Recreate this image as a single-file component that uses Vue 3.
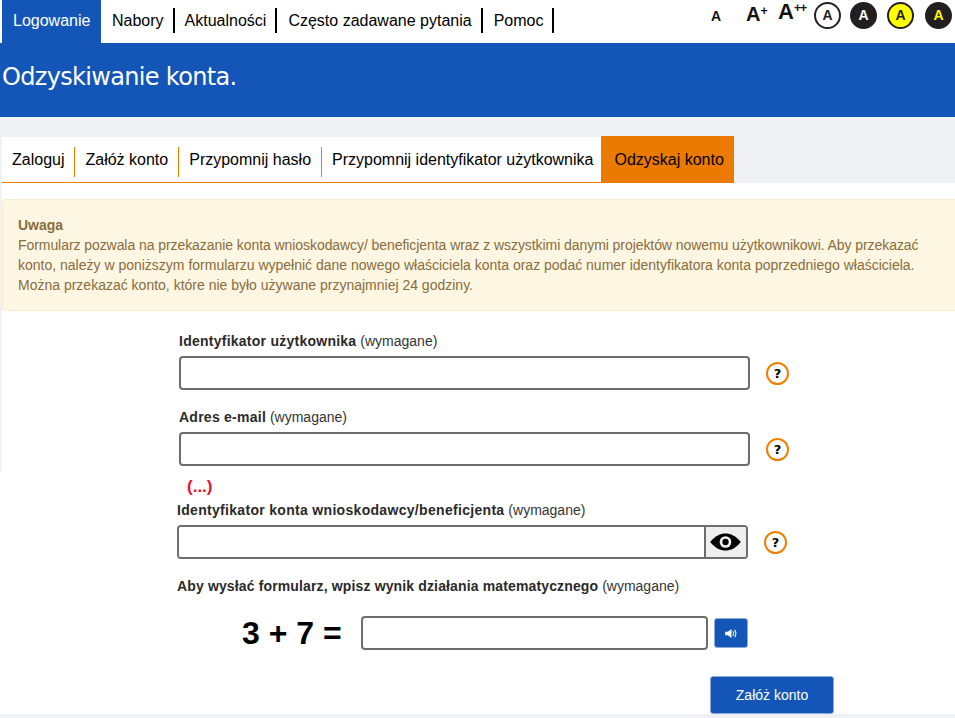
<script setup>
const menu = ['Nabory', 'Aktualności', 'Często zadawane pytania', 'Pomoc']
const tabs = ['Zaloguj', 'Załóż konto', 'Przypomnij hasło', 'Przypomnij identyfikator użytkownika']
</script>

<template>
  <div class="page">
    <nav class="topnav">
      <a class="tab-on">Logowanie</a>
      <a v-for="m in menu" :key="m" class="item">{{ m }}</a>
      <div class="access">
        <span class="sz s1">A</span>
        <span class="sz s2">A<sup>+</sup></span>
        <span class="sz s3">A<sup>++</sup></span>
        <span class="dot d-white">A</span>
        <span class="dot d-black">A</span>
        <span class="dot d-yellow">A</span>
        <span class="dot d-by">A</span>
      </div>
    </nav>
    <header class="hero"><h1>Odzyskiwanie konta.</h1></header>

    <div class="upper">
      <div class="tabs">
        <a v-for="t in tabs" :key="t" class="t">{{ t }}</a>
        <a class="t-on">Odzyskaj konto</a>
      </div>
      <div class="body">
        <div class="alert">
          <strong>Uwaga</strong><br>
          <span class="line1">Formularz pozwala na przekazanie konta wnioskodawcy/ beneficjenta wraz z wszystkimi danymi projektów nowemu użytkownikowi. Aby przekazać</span>
          konto, należy w poniższym formularzu wypełnić dane nowego właściciela konta oraz podać numer identyfikatora konta poprzedniego właściciela. Można przekazać konto, które nie było używane przynajmniej 24 godziny.
        </div>
        <div class="field f1">
          <label><b>Identyfikator użytkownika</b> (wymagane)</label>
          <div class="row">
            <input type="text" class="inp" />
            <span class="help">?</span>
          </div>
        </div>
        <div class="field f2">
          <label><b>Adres e-mail</b> (wymagane)</label>
          <div class="row">
            <input type="text" class="inp" />
            <span class="help">?</span>
          </div>
        </div>
      </div>
    </div>

    <div class="lower">
      <div class="dots">(...)</div>
      <div class="field f3">
        <label><b>Identyfikator konta wnioskodawcy/beneficjenta</b> (wymagane)</label>
        <div class="row">
          <div class="group">
            <input type="text" class="inp-g" />
            <button class="eye" aria-label="Pokaż">
              <svg width="33" height="18" viewBox="0 0 34 20">
                <path d="M0 10C6 3 11 .5 17 .5S28 3 34 10C28 17 23 19.500 17 19.500S6 17 0 10Z" fill="#000"/>
                <circle cx="17" cy="10" r="6.500" fill="#eee"/>
                <circle cx="17" cy="10" r="3.500" fill="#000"/>
              </svg>
            </button>
          </div>
          <span class="help">?</span>
        </div>
      </div>
      <div class="f4"><b>Aby wysłać formularz, wpisz wynik działania matematycznego</b> (wymagane)</div>
      <div class="math">
        <span class="eq">3 + 7 =</span>
        <input type="text" class="inp-m" />
        <button class="snd" aria-label="Odsłuchaj">
          <svg width="12" height="9" viewBox="0 0 13 10">
            <path d="M0 3h3l4-3v10L3 7H0Z" fill="#fff"/>
            <path d="M8.500 2.500c1 1.500 1 3.500 0 5M10.500 1c1.800 2.500 1.800 5.500 0 8" fill="none" stroke="#fff" stroke-width="1.200"/>
          </svg>
        </button>
      </div>
      <div class="submit"><button class="btn">Załóż konto</button></div>
    </div>
  </div>
</template>

<style scoped>
.page { width: 955px; height: 718px; overflow: hidden; background: #f0f1f5; font-family: "Liberation Sans", Arial, sans-serif; color: #000; }
.topnav { height: 43px; background: #fff; display: flex; padding-left: 2px; font-size: 16px; position: relative; }
.tab-on { width: 99px; box-sizing: border-box; padding-left: 11px; background: #1356b8; color: #fff; line-height: 42px; }
.item { margin: 8px 0 10px; padding: 0 9px 0 11px; border-right: 2px solid #000; line-height: 25px; height: 25px; }
.item:nth-child(3) { margin-left: -1px; }
.access { margin-left: auto; position: relative; width: 260px; }
.sz, .dot { position: absolute; font-weight: 700; }
.sz { color: #111; line-height: 1; white-space: nowrap; }
.sz sup { font-size: 0.62em; line-height: 0; vertical-align: 0.5em; }
.s1 { left: 16px; top: 9px; font-size: 14px; }
.s2 { left: 51px; top: 4px; font-size: 20px; }
.s3 { left: 83px; top: 1px; font-size: 22px; }
.s3 sup { font-size: 0.55em; vertical-align: 0.6em; letter-spacing: -1px; }
.dot { top: 2px; width: 27px; height: 27px; border-radius: 50%; box-sizing: border-box; text-align: center; font-size: 14px; line-height: 27px; }
.d-white { left: 119px; background: #fff; border: 2px solid #222; color: #222; line-height: 23px; }
.d-black { left: 155px; background: #231f20; color: #fff; }
.d-yellow { left: 192px; background: #ff0; border: 2px solid #231f20; color: #222; line-height: 23px; }
.d-by { left: 230px; background: #231f20; color: #ff0; }
.hero { height: 74px; background: #1356b8; color: #fff; }
.hero h1 { margin: 0; padding: 18px 0 0 2px; font: 400 24px/32px "DejaVu Sans", Tahoma, sans-serif; letter-spacing: -0.68px; }
.upper { height: 355px; padding-left: 2px; box-sizing: border-box; }
.tabs { height: 66px; box-sizing: border-box; padding-top: 20px; display: flex; font-size: 16px; position: relative; }
.tabs::before { content: ""; position: absolute; left: 0; top: 20px; width: 599px; height: 46px; box-sizing: border-box; background: #fff; border-bottom: 1px solid #ee7f00; }
.t { position: relative; height: 30px; margin-top: 10px; padding: 0 10px 0 10px; line-height: 26px; border-right: 1px solid #ee7f00; }
.t:nth-child(4) { border-right: 0; padding-right: 8px; }
.t-on { position: relative; margin-top: -1px; width: 133px; height: 47px; box-sizing: border-box; padding-left: 13px; background: #ea7a00; line-height: 48px; white-space: nowrap; }
.body { background: #fff; height: 289px; padding-top: 16px; box-sizing: border-box; }
.alert { height: 112px; box-sizing: border-box; padding: 15px; background: #fcf6e2; border: 1px solid #faebcc; border-right: 0; border-radius: 4px 0 0 4px; color: #8a6d3b; font-size: 14px; line-height: 20px; }
.line1 { letter-spacing: -0.067px; }
.field label { display: block; font-size: 14px; line-height: 20px; color: #333; }
.field b { color: #2a2a2a; letter-spacing: 0.25px; }
.field { margin-left: 177px; }
.f1 { margin-top: 20px; }
.f2 { margin-top: 17px; }
.row { display: flex; align-items: center; margin-top: 5px; }
.inp { width: 571px; height: 34px; box-sizing: border-box; border: 2px solid #6d6d6d; border-radius: 4px; background: #fff; padding: 0 10px; }
.help { margin-left: 16px; width: 23px; height: 23px; box-sizing: border-box; border: 2px solid #ee7f00; border-radius: 50%; text-align: center; font: 700 13px/19px "DejaVu Sans", sans-serif; color: #000; }
.lower { height: 242px; background: #fff; position: relative; }
.dots { padding-left: 187px; padding-top: 5px; font-size: 17px; font-weight: 700; line-height: 20px; color: #e8112d; }
.f3 { margin-left: 177px; margin-top: 3px; }
.f3 b { letter-spacing: 0.31px; }
.f3 .row { margin-top: 5px; }
.group { width: 571px; height: 34px; box-sizing: border-box; border: 2px solid #6d6d6d; border-radius: 4px; display: flex; overflow: hidden; background: #fff; }
.inp-g { flex: 1; min-width: 0; border: 0; background: #fff; }
.eye { width: 42px; padding: 0 2px 0 0; border: 0; border-left: 2px solid #6d6d6d; background: #eee; display: flex; align-items: center; justify-content: center; }
.f4 { margin: 17px 0 0 177px; font-size: 14px; line-height: 20px; color: #333; }
.f4 b { color: #2a2a2a; letter-spacing: 0.14px; }
.math { display: flex; align-items: center; margin: 20px 0 0 242px; height: 34px; }
.eq { width: 119px; font-size: 32px; font-weight: 700; line-height: 34px; }
.inp-m { width: 347px; height: 34px; box-sizing: border-box; border: 2px solid #6d6d6d; border-radius: 4px; background: #fff; }
.snd { margin-left: 6px; width: 34px; height: 30px; border: 1px solid #8fa9d6; border-radius: 3px; background: #1356b8; padding: 0; display: flex; align-items: center; justify-content: center; }
.submit { margin: 26px 0 0 710px; }
.btn { width: 124px; height: 38px; border: 1px solid #8fa9d6; border-radius: 3px; background: #1356b8; color: #fff; font: 14px "Liberation Sans", Arial, sans-serif; }
</style>
